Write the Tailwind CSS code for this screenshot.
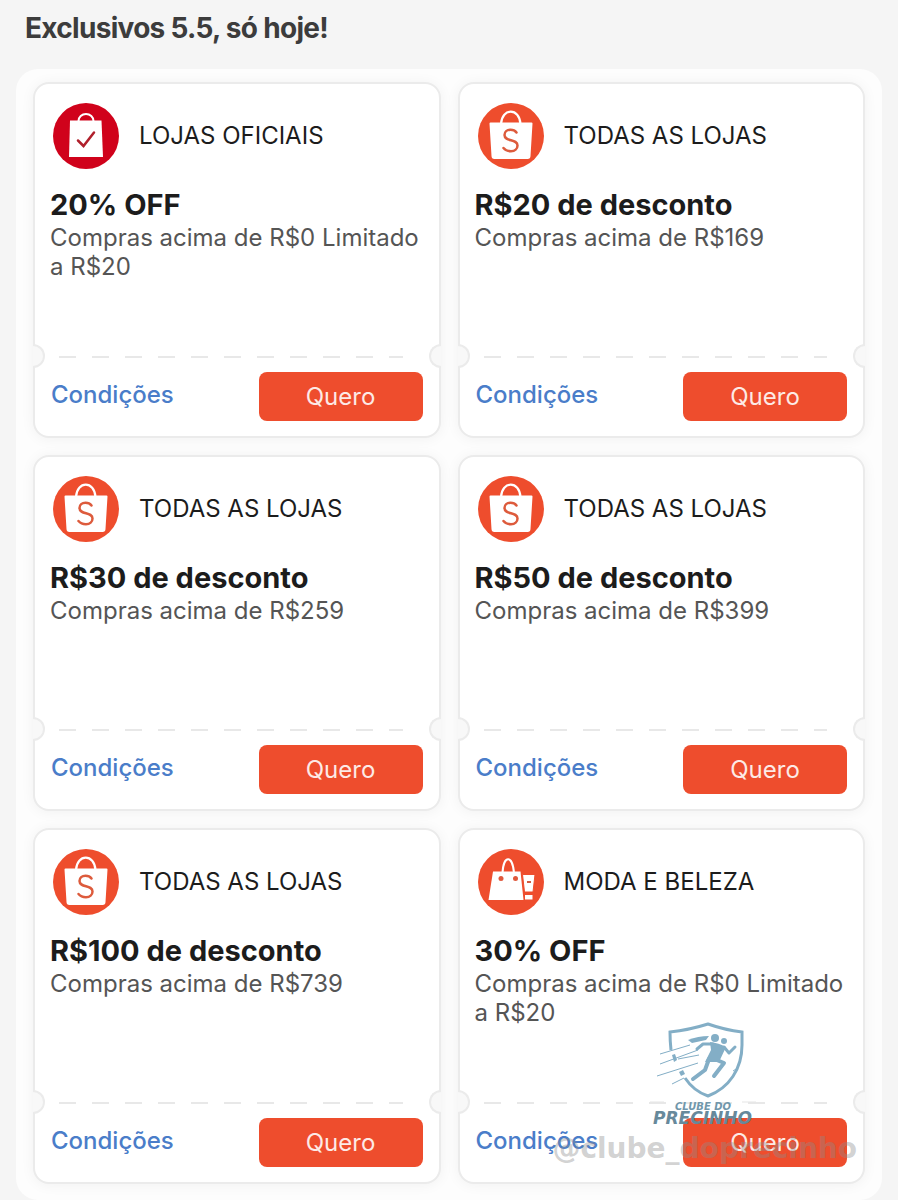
<!DOCTYPE html>
<html lang="pt-BR">
  <head>
    <meta charset="UTF-8" />
    <meta name="viewport" content="width=device-width, initial-scale=1.0" />
    <title>Exclusivos 5.5</title>
    <script src="https://cdn.jsdelivr.net/npm/@tailwindcss/browser@4"></script>
  </head>
  <body class="bg-[#f5f5f5] font-['Inter','Liberation_Sans',sans-serif]">
    <svg class="hidden">
      <symbol id="icon-official" viewBox="0 0 66 66">
        <circle cx="33" cy="33" r="33" fill="#d0021b" />
        <path d="M25.500 19V18a7.500 7 0 0 1 15 0v1" fill="none" stroke="#fff" stroke-width="2" />
        <path d="M17 17.500h31.500L50 54H16z" fill="#fff" />
        <path d="M25 37.500l5.500 5.500L41 29.500" fill="none" stroke="#b0202c" stroke-width="2.500" stroke-linecap="round" />
      </symbol>
      <symbol id="icon-shop" viewBox="0 0 66 66">
        <circle cx="33" cy="33" r="33" fill="#ee4d2d" />
        <path d="M23 21C24 4.500 41.500 4.500 42.500 21" fill="none" stroke="#fff" stroke-width="2.200" />
        <path d="M11.500 20.500a1 1 0 0 1 1-1h41a1 1 0 0 1 1 1L52.500 53a3 3 0 0 1-3 3H16.500a3 3 0 0 1-3-3z" fill="#fff" />
        <path d="M38.500 29.500C37 27.500 35 26.800 32.500 26.800C29 26.800 26.500 28.800 26.500 32C26.500 39 39.500 35.500 39.500 42.500C39.500 46 36.800 48.200 33 48.200C30 48.200 27.500 47.500 25.500 45" fill="none" stroke="#dd5b3c" stroke-width="2.500" stroke-linecap="round" />
      </symbol>
      <symbol id="icon-fashion" viewBox="0 0 66 66">
        <circle cx="33" cy="33" r="33" fill="#ee4d2d" />
        <path d="M24.500 24C25.500 5.500 34.500 5.500 36 24" fill="none" stroke="#fff" stroke-width="2" />
        <path d="M15 22.500h27.500L45.500 51H10.500z" fill="#fff" />
        <circle cx="23" cy="29.500" r="2.500" fill="#e0583c" />
        <circle cx="37.500" cy="29.500" r="2.500" fill="#e0583c" />
        <path d="M44.500 25.500H57L55 43H46.500z" fill="#fff" stroke="#ee4d2d" stroke-width="1" />
        <path d="M49 33h4" stroke="#d05a40" stroke-width="2" />
        <path d="M47 46h7.500v4.500H47z" fill="#fff" />
      </symbol>
    </svg>

    <h1 class="px-[25px] pt-3 pb-6 text-[28px] leading-[33px] font-bold tracking-tight text-[#3c3c3c]">Exclusivos 5.5, só hoje!</h1>

    <main id="coupons" class="mx-4 grid grid-cols-2 gap-[17px] rounded-[22px] bg-[#fdfdfd] px-[17px] pt-[13px] pb-4"></main>

    <template id="watermark">
      <svg class="pointer-events-none absolute right-[105px] bottom-[53px] h-[110px] w-[108px]" viewBox="0 0 108 110" aria-hidden="true">
        <g fill="none" stroke="#83aec6">
          <path d="M21 31Q20 22 20 13Q39 11 58 5Q75 11 92 13V26C92 50 79 69 58 77C49 74 41 68 35 59" stroke-width="3" />
          <path d="M10 35L40 26M10 45L48 31M28 40l21-4M7 57L48 44M22 65L34 59M83 52l6-4" stroke-width="1" />
        </g>
        <g fill="none" stroke="#83aec6" stroke-width="3" stroke-linecap="round" stroke-linejoin="round">
          <path d="M74 28L79 34L85 28" />
          <path d="M63 25L53 25L47 30" />
          <path d="M62 39L74 44L64 57" stroke-width="4" />
          <path d="M59 40L55 51L43 60" stroke-width="4" />
        </g>
        <g fill="#83aec6">
          <circle cx="65" cy="19" r="4" />
          <circle cx="74" cy="22" r="3" />
          <path d="M38 21Q48 17 59 17L56 21L42 24z" />
          <path d="M60 23Q69 24 76 28L69 43L55 43L61 31z" />
          <path d="M22 36l3-1 2 6-3 2zM29 53l4-2 2 4-4 2z" />
        </g>
        <text x="25" y="91" fill="#7197ab" class="font-['DejaVu_Sans',sans-serif] text-[10px] font-bold italic">CLUBE DO</text>
        <text x="3" y="105" fill="#67899b" class="font-['DejaVu_Sans',sans-serif] text-[17px] font-bold italic">PRECINHO</text>
        <path d="M0 83h14M92 83h14" stroke="#e5e5e5" />
      </svg>
      <p class="pointer-events-none absolute right-1.5 bottom-[18px] font-['DejaVu_Sans',sans-serif] text-[28px] leading-[30px] font-bold text-[#8c8c8c]/40">@clube_doprecinho</p>
    </template>

    <script>
      const coupons = [
        { icon: "icon-official", shop: "LOJAS OFICIAIS", title: "20% OFF", terms: "Compras acima de R$0 Limitado a R$20" },
        { icon: "icon-shop", shop: "TODAS AS LOJAS", title: "R$20 de desconto", terms: "Compras acima de R$169" },
        { icon: "icon-shop", shop: "TODAS AS LOJAS", title: "R$30 de desconto", terms: "Compras acima de R$259" },
        { icon: "icon-shop", shop: "TODAS AS LOJAS", title: "R$50 de desconto", terms: "Compras acima de R$399" },
        { icon: "icon-shop", shop: "TODAS AS LOJAS", title: "R$100 de desconto", terms: "Compras acima de R$739" },
        { icon: "icon-fashion", shop: "MODA E BELEZA", title: "30% OFF", terms: "Compras acima de R$0 Limitado a R$20" },
      ];

      const list = document.getElementById("coupons");

      coupons.forEach((coupon) => {
        const card = document.createElement("article");
        card.className =
          "relative flex flex-col rounded-2xl border-2 border-[#ebebeb] bg-white shadow-[0_1px_14px_rgba(0,0,0,0.05)]";
        card.innerHTML = `
          <div class="min-h-[272px] px-[15px] pt-[19px]">
            <div class="flex items-center gap-5 pl-[3px]">
              <svg class="size-[66px] shrink-0"><use href="#${coupon.icon}" /></svg>
              <span class="text-2xl text-[#1c1c1c]">${coupon.shop}</span>
            </div>
            <h2 class="mt-5 mb-0.5 text-[29px] leading-8 font-bold text-[#1c1c1c]">${coupon.title}</h2>
            <p class="text-2xl leading-[29px] text-[#555]">${coupon.terms}</p>
          </div>
          <div class="relative">
            <span class="absolute -top-3 -left-[2px] h-6 w-3 rounded-r-full border-2 border-l-0 border-[#ebebeb] bg-[#f8f8f8]"></span>
            <span class="absolute -top-3 -right-[2px] h-6 w-3 rounded-l-full border-2 border-r-0 border-[#ebebeb] bg-[#f8f8f8]"></span>
            <div class="mr-9 ml-6 h-[2px] bg-[repeating-linear-gradient(to_right,#e8e8e8_0_17px,transparent_17px_33px)]"></div>
          </div>
          <div class="flex items-center justify-between px-4 pt-[14px] pb-[15px]">
            <a href="#" class="pb-1 text-2xl font-medium text-[#4a7dc9]">Condições</a>
            <button class="h-[49px] w-[164px] rounded-lg bg-[#ee4d2d] text-2xl text-[#fdeae6]">Quero</button>
          </div>
        `;
        list.appendChild(card);
      });

      list.lastElementChild.appendChild(
        document.getElementById("watermark").content.cloneNode(true)
      );
    </script>
  </body>
</html>
